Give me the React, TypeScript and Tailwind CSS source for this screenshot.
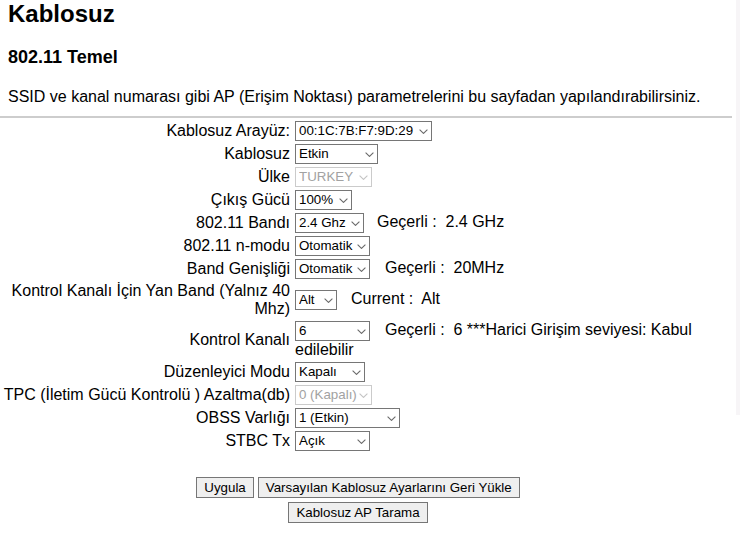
import React from 'react';
import clsx from 'clsx';

interface SelProps {
  width: string;
  value: string;
  disabled?: boolean;
}

function Sel({ width, value, disabled }: SelProps) {
  return (
    <span className={clsx('relative inline-block align-middle h-[20px]', width)}>
      <select
        defaultValue={value}
        disabled={disabled}
        className={clsx(
          'appearance-none block h-[20px] w-full rounded-none border bg-white pl-[3px] pr-[13px] text-[13.33px] leading-[18px] outline-none',
          disabled ? 'border-[#cbcbcb] text-[#a2a2a2]' : 'border-[#767676] text-black'
        )}
      >
        <option value={value}>{value}</option>
      </select>
      <svg
        className="pointer-events-none absolute right-[4px] top-[8px]"
        width="9"
        height="5"
        viewBox="0 0 9 5"
        fill="none"
      >
        <path
          d="M0.6 0.6 L4.5 4.4 L8.4 0.6"
          stroke={disabled ? '#c4c4c4' : '#6a6a6a'}
          strokeWidth="1.1"
        />
      </svg>
    </span>
  );
}

interface RowProps {
  label: React.ReactNode;
  children: React.ReactNode;
  tall?: boolean;
}

function Row({ label, children, tall }: RowProps) {
  return (
    <div
      className={clsx(
        'grid grid-cols-[293px_1fr] items-center min-h-[23px]',
        tall ? 'py-[2px]' : 'py-[1px]'
      )}
    >
      <div className="text-right pr-[3px] leading-[18px]">{label}</div>
      <div className="pl-[2px] leading-[18px]">{children}</div>
    </div>
  );
}

const btn = 'h-[21px] px-[7px] border border-[#767676] bg-[#efefef] leading-[19px]';

export default function App() {
  return (
    <div className="flex bg-white text-black font-['Liberation_Sans',Arial,sans-serif] text-[16px]">
      <div className="w-[736px]">
        <h1 className="pl-2 text-[24px] font-bold leading-[28px]">Kablosuz</h1>
        <h2 className="pl-2 mt-[18px] text-[18px] font-bold leading-[22px]">802.11 Temel</h2>
        <p className="pl-2 mt-[20px] leading-[18px]">
          SSID ve kanal numarası gibi AP (Erişim Noktası) parametrelerini bu sayfadan yapılandırabilirsiniz.
        </p>
        <div className="mt-[10px] h-[2px] w-[732px] bg-[#cdcdcd]" />

        {/* Settings table */}
        <div className="mt-[1px]">
          <Row label="Kablosuz Arayüz:">
            <Sel width="w-[137px]" value="00:1C:7B:F7:9D:29" />
          </Row>
          <Row label="Kablosuz">
            <Sel width="w-[83px]" value="Etkin" />
          </Row>
          <Row label="Ülke">
            <Sel width="w-[77px]" value="TURKEY" disabled />
          </Row>
          <Row label="Çıkış Gücü">
            <Sel width="w-[57px]" value="100%" />
          </Row>
          <Row label="802.11 Bandı">
            <Sel width="w-[69px]" value="2.4 Ghz" />
            <span className="ml-[13px]">Geçerli :{'\u00a0'} 2.4 GHz</span>
          </Row>
          <Row label="802.11 n-modu">
            <Sel width="w-[75px]" value="Otomatik" />
          </Row>
          <Row label="Band Genişliği">
            <Sel width="w-[75px]" value="Otomatik" />
            <span className="ml-[15px]">Geçerli :{'\u00a0'} 20MHz</span>
          </Row>
          <Row label="Kontrol Kanalı İçin Yan Band (Yalnız 40 Mhz)" tall>
            <Sel width="w-[42px]" value="Alt" />
            <span className="ml-[14px]">Current :{'\u00a0'} Alt</span>
          </Row>
          <Row label="Kontrol Kanalı">
            <Sel width="w-[75px]" value="6" />
            <span className="ml-[15px]">
              Geçerli :{'\u00a0'} 6 ***Harici Girişim seviyesi: Kabul edilebilir
            </span>
          </Row>
          <Row label="Düzenleyici Modu">
            <Sel width="w-[70px]" value="Kapalı" />
          </Row>
          <Row label="TPC (İletim Gücü Kontrolü ) Azaltma(db)">
            <Sel width="w-[77px]" value="0 (Kapalı)" disabled />
          </Row>
          <Row label="OBSS Varlığı">
            <Sel width="w-[105px]" value="1 (Etkin)" />
          </Row>
          <Row label="STBC Tx">
            <Sel width="w-[75px]" value="Açık" />
          </Row>
        </div>

        {/* Actions */}
        <div className="w-[716px] mt-[25px] flex flex-col items-center gap-[4px] text-[13.33px]">
          <div className="flex gap-[4px]">
            <button className={btn}>Uygula</button>
            <button className={btn}>Varsayılan Kablosuz Ayarlarını Geri Yükle</button>
          </div>
          <button className={btn}>Kablosuz AP Tarama</button>
        </div>
      </div>
      <div className="w-[4px] h-[415px] bg-[#f7f5f7]" />
    </div>
  );
}
